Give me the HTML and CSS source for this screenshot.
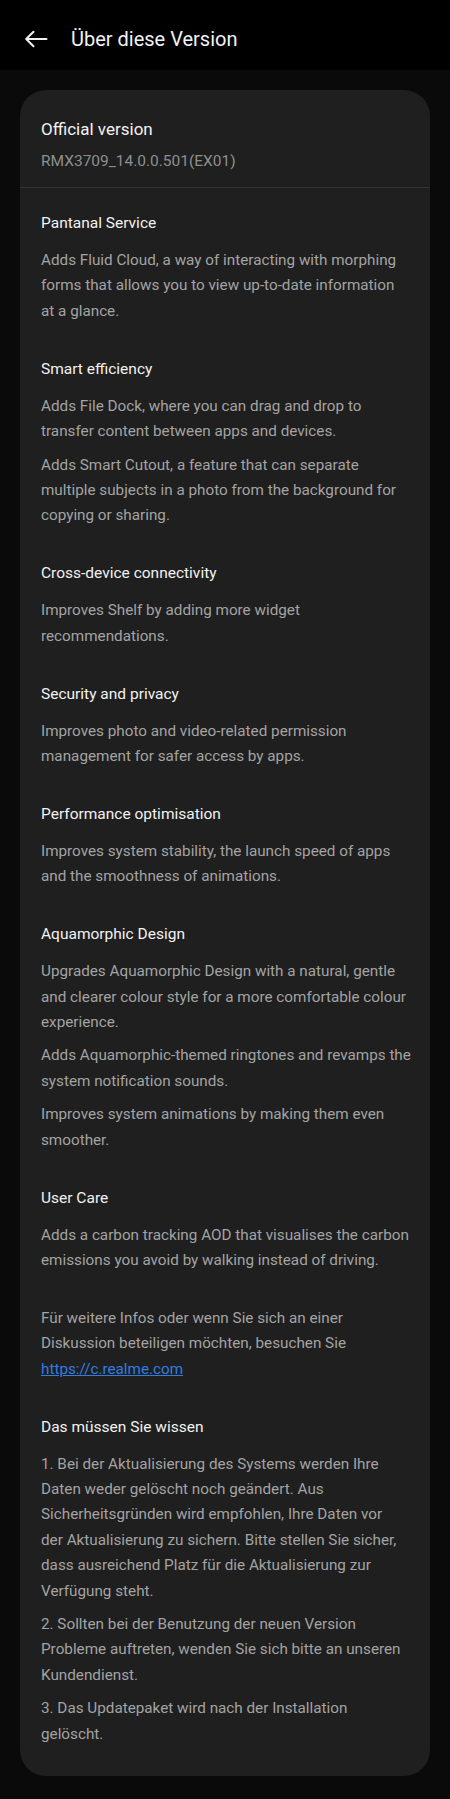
FILE: index.html
```html
<!DOCTYPE html>
<html lang="de">
<head>
<meta charset="utf-8">
<title>Über diese Version</title>
<link rel="stylesheet" href="styles.css">
</head>
<body>
<header class="topbar">
  <svg class="back" width="24" height="18" viewBox="0 0 24 18" aria-hidden="true">
    <path d="M22.5 9H2.5M9.5 1.8L2.2 9l7.3 7.2" fill="none" stroke="#f2f2f2" stroke-width="2" stroke-linecap="round" stroke-linejoin="round"/>
  </svg>
  <h1 class="title">Über diese Version</h1>
</header>
<main class="page">
  <section class="card">
    <div class="version">
      <div class="version-name">Official version</div>
      <div class="version-code">RMX3709_14.0.0.501(EX01)</div>
    </div>
    <div class="notes">
      <div class="group">
        <h2 class="head">Pantanal Service</h2>
        <p class="text">Adds Fluid Cloud, a way of interacting with morphing<br>forms that allows you to view up-to-date information<br>at a glance.</p>
      </div>
      <div class="group">
        <h2 class="head">Smart efficiency</h2>
        <p class="text">Adds File Dock, where you can drag and drop to<br>transfer content between apps and devices.</p>
        <p class="text">Adds Smart Cutout, a feature that can separate<br>multiple subjects in a photo from the background for<br>copying or sharing.</p>
      </div>
      <div class="group">
        <h2 class="head">Cross-device connectivity</h2>
        <p class="text">Improves Shelf by adding more widget<br>recommendations.</p>
      </div>
      <div class="group">
        <h2 class="head">Security and privacy</h2>
        <p class="text">Improves photo and video-related permission<br>management for safer access by apps.</p>
      </div>
      <div class="group">
        <h2 class="head">Performance optimisation</h2>
        <p class="text">Improves system stability, the launch speed of apps<br>and the smoothness of animations.</p>
      </div>
      <div class="group">
        <h2 class="head">Aquamorphic Design</h2>
        <p class="text">Upgrades Aquamorphic Design with a natural, gentle<br>and clearer colour style for a more comfortable colour<br>experience.</p>
        <p class="text">Adds Aquamorphic-themed ringtones and revamps the<br>system notification sounds.</p>
        <p class="text">Improves system animations by making them even<br>smoother.</p>
      </div>
      <div class="group">
        <h2 class="head">User Care</h2>
        <p class="text">Adds a carbon tracking AOD that visualises the carbon<br>emissions you avoid by walking instead of driving.</p>
      </div>
      <div class="group">
        <p class="text">Für weitere Infos oder wenn Sie sich an einer<br>Diskussion beteiligen möchten, besuchen Sie<br><a class="link" href="#">https://c.realme.com</a></p>
      </div>
      <div class="group">
        <h2 class="head">Das müssen Sie wissen</h2>
        <p class="text">1. Bei der Aktualisierung des Systems werden Ihre<br>Daten weder gelöscht noch geändert. Aus<br>Sicherheitsgründen wird empfohlen, Ihre Daten vor<br>der Aktualisierung zu sichern. Bitte stellen Sie sicher,<br>dass ausreichend Platz für die Aktualisierung zur<br>Verfügung steht.</p>
        <p class="text">2. Sollten bei der Benutzung der neuen Version<br>Probleme auftreten, wenden Sie sich bitte an unseren<br>Kundendienst.</p>
        <p class="text">3. Das Updatepaket wird nach der Installation<br>gelöscht.</p>
      </div>
    </div>
  </section>
</main>
</body>
</html>
```
FILE: styles.css
```css
* { box-sizing: border-box; }
html, body { margin: 0; padding: 0; }
body {
  background: #0a0a0a;
  font-family: Roboto, "Noto Sans", "Liberation Sans", sans-serif;
  color: #f0f0f0;
  min-height: 1799px;
}
.topbar {
  height: 70px;
  background: #000;
  display: flex;
  align-items: center;
  padding: 8px 0 0 24px;
}
.back { display: block; }
.title {
  margin: 0 0 0 23px;
  font-size: 20px;
  font-weight: 400;
  color: #f2f2f2;
}
.page { padding: 20px 20px 23px; }
.card {
  background: #1f1f1f;
  border-radius: 26px;
  padding-bottom: 29px;
}
.version {
  padding: 27px 21px 15px;
  border-bottom: 1px solid #333;
}
.version-name {
  font-size: 17px;
  line-height: 24px;
  color: #f2f2f2;
}
.version-code {
  margin-top: 9px;
  font-size: 15.5px;
  line-height: 22px;
  color: #8e8e8e;
}
.notes {
  padding: 23px 12px 0 21px;
  display: flex;
  flex-direction: column;
  gap: 32.5px;
}
.group { display: flex; flex-direction: column; gap: 8px; }
.head {
  margin: 0 0 5px;
  font-size: 15.5px;
  font-weight: 400;
  line-height: 24px;
  color: #f2f2f2;
}
.text {
  margin: 0;
  font-size: 15.25px;
  line-height: 25.4px;
  color: #a3a3a3;
}
.link { color: #2f7de1; text-decoration: underline; }
```
